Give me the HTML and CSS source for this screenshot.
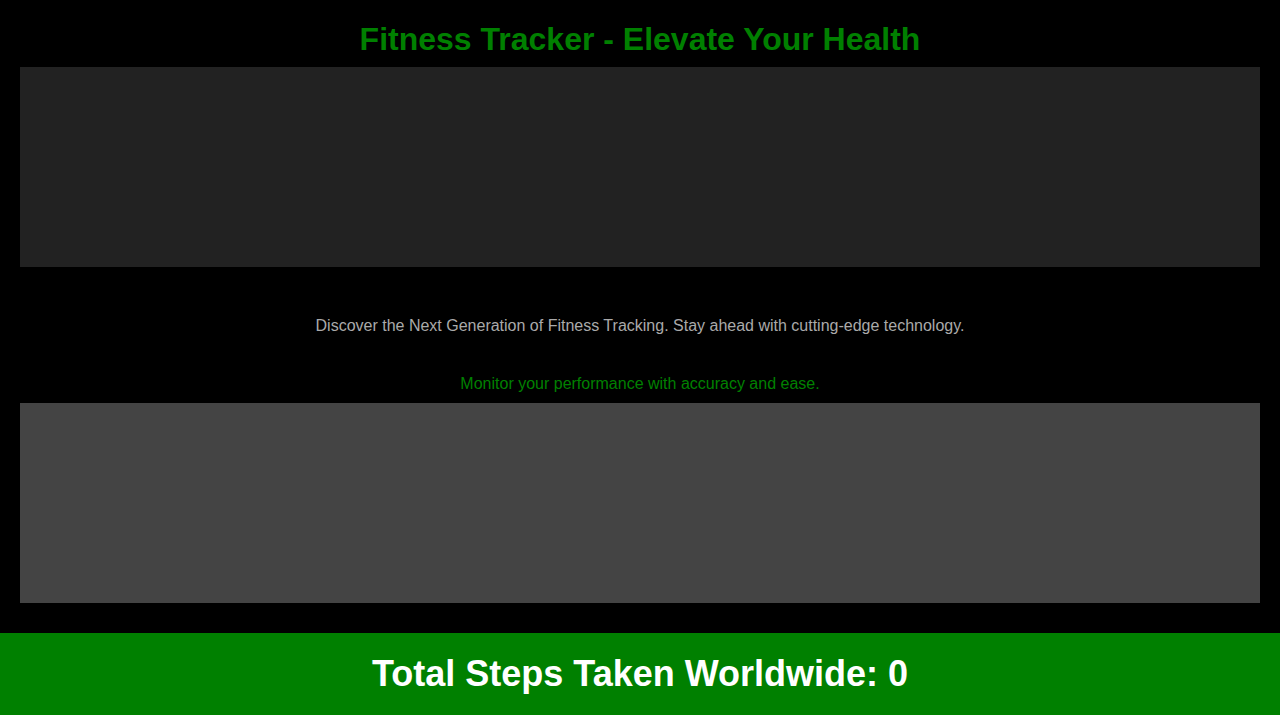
FILE: index.html
```html
<!DOCTYPE html>
<html lang="en">
<head>
<meta charset="utf-8">
<title>Fitness Tracker</title>
<link rel="stylesheet" href="styles.css">
</head>
<body>
<main class="page">
  <h1 class="title">Fitness Tracker - Elevate Your Health</h1>
  <div class="panel panel-dark"></div>
  <p class="intro">Discover the Next Generation of Fitness Tracking. Stay ahead with cutting-edge technology.</p>
  <p class="tagline">Monitor your performance with accuracy and ease.</p>
  <div class="panel panel-mid"></div>
</main>
<footer class="footer">
  <h2 class="steps">Total Steps Taken Worldwide: 0</h2>
</footer>
</body>
</html>
```
FILE: styles.css
```css
html, body {
  margin: 0;
  padding: 0;
  background: #000;
  font-family: "Liberation Sans", Arial, sans-serif;
}
.page {
  padding: 21px 20px 30px;
  display: flex;
  flex-direction: column;
}
.title {
  margin: 0 0 9px;
  font-size: 32px;
  line-height: 37px;
  font-weight: bold;
  color: #008000;
  text-align: center;
}
.panel {
  height: 200px;
}
.panel-dark { background: #222; }
.panel-mid { background: #444; }
.intro {
  margin: 50px 0 0;
  font-size: 16px;
  line-height: 18px;
  color: #aaa;
  text-align: center;
}
.tagline {
  margin: 40px 0 10px;
  font-size: 16px;
  line-height: 18px;
  color: #008000;
  text-align: center;
}
.footer {
  background: #008000;
  padding: 20px 0 21px;
}
.steps {
  margin: 0;
  font-size: 36px;
  line-height: 41px;
  font-weight: bold;
  color: #fff;
  text-align: center;
}
```
